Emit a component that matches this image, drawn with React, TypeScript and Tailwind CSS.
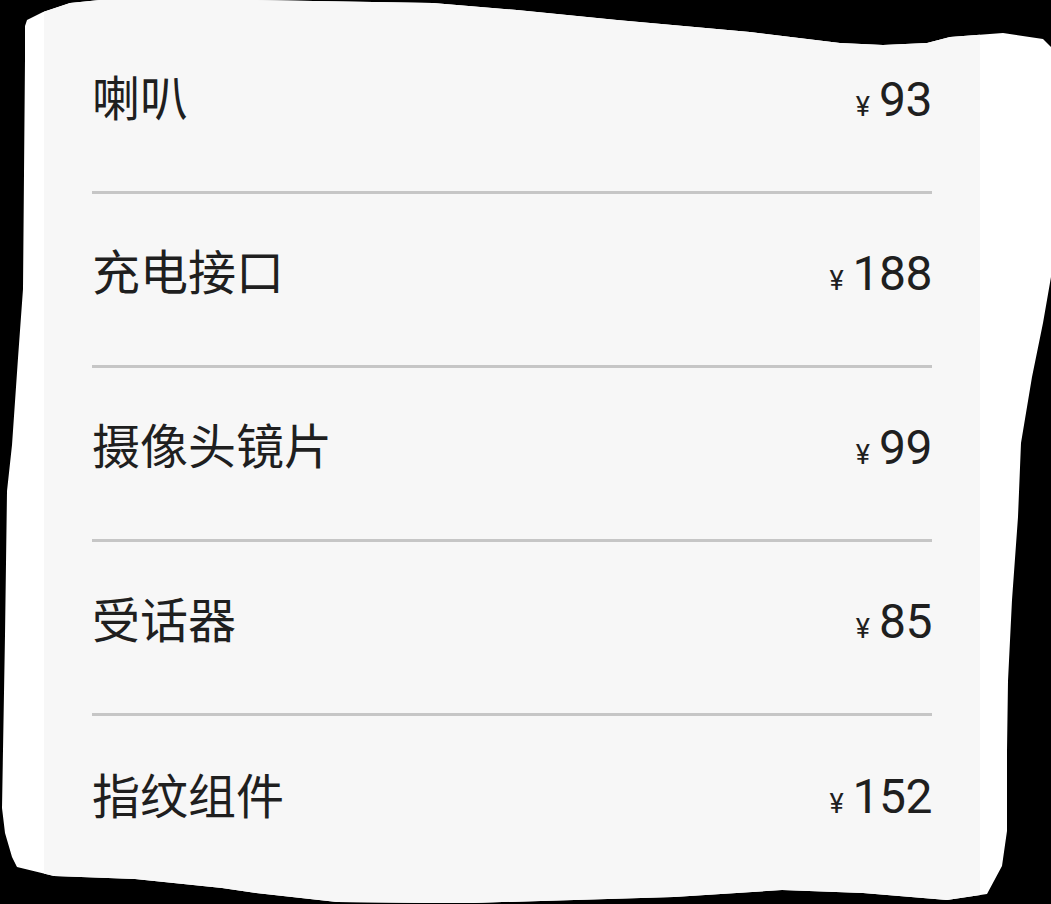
import React from "react";

const items = [
  { name: "喇叭", price: "93" },
  { name: "充电接口", price: "188" },
  { name: "摄像头镜片", price: "99" },
  { name: "受话器", price: "85" },
  { name: "指纹组件", price: "152" },
];

export default function App() {
  return (
    <div className="w-[1051px] h-[904px] bg-black overflow-hidden">
      <div className="w-full h-full bg-white pl-[44px] [clip-path:polygon(25px_26px,27px_20px,43px_12px,70px_3px,100px_0px,250px_0px,433px_3px,517px_10px,617px_20px,750px_32px,840px_43px,883px_45px,927px_43px,950px_37px,1003px_33px,1043px_39px,1051px_47px,1051px_277px,1043px_323px,1032px_377px,1021px_443px,1018px_517px,1012px_600px,1008px_681px,1007px_751px,1007px_831px,1002px_866px,987px_894px,947px_900px,863px_893px,782px_890px,674px_897px,472px_903px,431px_903px,337px_902px,256px_893px,222px_888px,135px_879px,54px_876px,17px_867px,12px_857px,5px_833px,2px_808px,5px_635px,7px_491px,12px_445px,18px_358px,23px_289px,25px_58px)]">
        <div
          className="w-[936px] h-full bg-[#f7f7f7] px-[48px] pt-[20px] text-[#1f1f1f]"
          style={{ fontFamily: '"Noto Sans CJK SC", "Noto Sans", sans-serif' }}
        >
          {items.map((it, i) => (
            <div
              key={it.name}
              className={`flex items-center justify-between h-[174px] pb-[21px] ${
                i < items.length - 1 ? "border-b-[3px] border-[#c6c6c6]" : ""
              }`}
            >
              <span className="text-[48px] leading-none">{it.name}</span>
              <span className="flex items-baseline leading-none mt-[9px] font-['Roboto',sans-serif]">
                <span className="text-[27px] mr-[9px]">¥</span>
                <span className="text-[48px] tracking-[-0.5px]">{it.price}</span>
              </span>
            </div>
          ))}
        </div>
      </div>
    </div>
  );
}
